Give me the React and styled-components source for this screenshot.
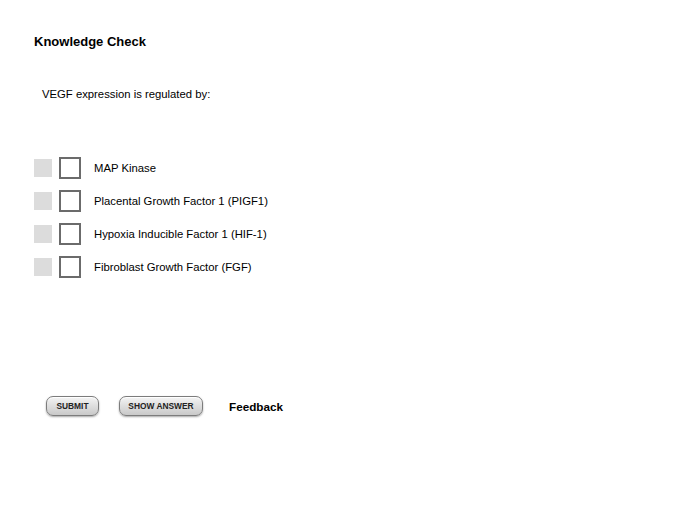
import React, { useState } from 'react';
import styled, { createGlobalStyle } from 'styled-components';

const GlobalStyle = createGlobalStyle`
  html, body {
    margin: 0;
    padding: 0;
    background: #ffffff;
  }
  body {
    font-family: "Liberation Sans", Arial, sans-serif;
    color: #000;
  }
`;

const Page = styled.div`
  width: 700px;
  height: 526px;
  box-sizing: border-box;
  padding: 34px 0 0 34px;
  display: flex;
  flex-direction: column;
`;

const Title = styled.h1`
  margin: 0;
  font-size: 13px;
  font-weight: bold;
  line-height: 15px;
`;

const Question = styled.p`
  margin: 38px 0 0 8px;
  font-size: 11.3px;
  line-height: 15px;
`;

const Options = styled.div`
  margin-top: 55px;
  display: flex;
  flex-direction: column;
  gap: 11px;
`;

const Row = styled.label`
  display: flex;
  align-items: center;
  height: 22px;
  cursor: pointer;
`;

const Marker = styled.span`
  width: 18px;
  height: 18px;
  background: #dcdcdc;
  margin-right: 7px;
`;

const Box = styled.span`
  width: 18px;
  height: 18px;
  border: 2px solid #6b6b6b;
  background: #fff;
  display: flex;
  align-items: center;
  justify-content: center;
  font-size: 14px;
  line-height: 1;
`;

const Label = styled.span`
  margin-left: 13px;
  font-size: 11.3px;
  line-height: 13px;
`;

const Footer = styled.div`
  margin-top: 118px;
  margin-left: 12px;
  display: flex;
  align-items: center;
`;

const Button = styled.button`
  width: ${(p) => p.$w}px;
  height: 20px;
  padding: 0;
  margin-right: ${(p) => p.$gap}px;
  border: 1px solid #7c7c7c;
  border-radius: 7px;
  background: linear-gradient(#f4f4f4 0%, #dedede 50%, #c9c9c9 100%);
  box-shadow: 0 1px 2px rgba(0, 0, 0, 0.35), inset 0 1px 0 #fff;
  font-family: "Liberation Sans", Arial, sans-serif;
  font-size: 8.4px;
  font-weight: bold;
  color: #222;
  cursor: pointer;
`;

const Feedback = styled.span`
  font-size: 11.7px;
  font-weight: bold;
  line-height: 15px;
`;

const options = [
  'MAP Kinase',
  'Placental Growth Factor 1 (PIGF1)',
  'Hypoxia Inducible Factor 1 (HIF-1)',
  'Fibroblast Growth Factor (FGF)',
];

export default function App() {
  const [checked, setChecked] = useState([]);

  const toggle = (i) => {
    setChecked(checked.includes(i) ? checked.filter((c) => c !== i) : [...checked, i]);
  };

  return (
    <>
      <GlobalStyle />
      <Page>
        <Title>Knowledge Check</Title>
        <Question>VEGF expression is regulated by:</Question>
        <Options>
          {options.map((text, i) => (
            <Row key={i} onClick={() => toggle(i)}>
              <Marker />
              <Box>{checked.includes(i) ? '✓' : ''}</Box>
              <Label>{text}</Label>
            </Row>
          ))}
        </Options>
        <Footer>
          <Button $w={53} $gap={20}>SUBMIT</Button>
          <Button $w={84} $gap={26}>SHOW ANSWER</Button>
          <Feedback>Feedback</Feedback>
        </Footer>
      </Page>
    </>
  );
}
